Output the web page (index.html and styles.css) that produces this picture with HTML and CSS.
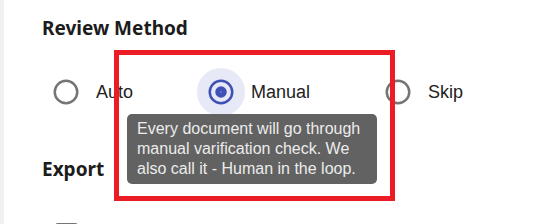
FILE: index.html
```html
<!DOCTYPE html>
<html lang="en">
<head>
<meta charset="utf-8">
<title>Review Method</title>
<link rel="stylesheet" href="styles.css">
</head>
<body>
<div class="page">
  <div class="rail"></div>
  <main class="content">
    <h2 class="section-title">Review Method</h2>
    <div class="radio-group" role="radiogroup">
      <label class="option">
        <span class="radio">
          <svg class="radio-icon" viewBox="0 0 24 24" width="30" height="30"><circle cx="12" cy="12" r="9" fill="none" stroke="#757575" stroke-width="2"/></svg>
        </span>
        <span class="option-label">Auto</span>
      </label>
      <label class="option option-tip">
        <span class="radio radio-checked">
          <svg class="radio-icon" viewBox="0 0 24 24" width="30" height="30"><circle cx="12" cy="12" r="9" fill="none" stroke="#3f51b5" stroke-width="2"/><circle cx="12" cy="12" r="4.6" fill="#3f51b5"/><circle cx="12" cy="12" r="0.5" fill="#c5cae9"/></svg>
        </span>
        <span class="option-label">Manual</span>
        <span class="tooltip" role="tooltip">Every document will go through manual varification check. We also call it - Human in the loop.</span>
      </label>
      <label class="option">
        <span class="radio">
          <svg class="radio-icon" viewBox="0 0 24 24" width="30" height="30"><circle cx="12" cy="12" r="9" fill="none" stroke="#757575" stroke-width="2"/></svg>
        </span>
        <span class="option-label">Skip</span>
      </label>
    </div>
    <h2 class="section-title section-export">Export</h2>
    <div class="check-group">
      <label class="option">
        <span class="radio">
          <span class="checkbox-box"></span>
        </span>
      </label>
    </div>
  </main>
  <div class="highlight"></div>
</div>
</body>
</html>
```
FILE: styles.css
```css
html, body {
  margin: 0;
  padding: 0;
  background: #ffffff;
}
body {
  font-family: "Liberation Sans", Arial, sans-serif;
  color: #212121;
  overflow: hidden;
}
.page {
  position: relative;
  display: flex;
  width: 559px;
  height: 224px;
  overflow: hidden;
}
.rail {
  width: 4px;
  flex: none;
  background: #f0f0f0;
}
.content {
  flex: 1;
  padding: 16px 0 0 38px;
}
.section-title {
  margin: 0;
  font-family: "Noto Sans", "Open Sans", sans-serif;
  font-weight: 700;
  font-size: 19px;
  line-height: 24px;
  color: #1c1c1c;
}
.radio-group {
  display: flex;
  align-items: center;
  gap: 64px;
  margin-top: 28px;
  height: 48px;
}
.section-export {
  margin-top: 41px;
}
.check-group {
  display: flex;
  margin-top: 29px;
  height: 48px;
}
.option {
  position: relative;
  display: flex;
  align-items: center;
  gap: 6px;
}
.radio {
  width: 48px;
  height: 48px;
  border-radius: 50%;
  display: flex;
  align-items: center;
  justify-content: center;
  flex: none;
}
.radio-checked {
  background: #e8e9f6;
}
.radio-icon {
  display: block;
}
.option-label {
  font-size: 18px;
  line-height: 24px;
  color: #222222;
}
.checkbox-box {
  width: 19px;
  height: 19px;
  border: 2.5px solid #757575;
  border-radius: 3px;
}
.tooltip {
  position: absolute;
  left: -70px;
  top: 46px;
  width: 250px;
  box-sizing: border-box;
  padding: 5px 10px;
  background: #626262;
  color: #ececec;
  border-radius: 5px;
  font-size: 16px;
  line-height: 20px;
  z-index: 2;
}
.highlight {
  position: absolute;
  left: 114px;
  top: 50px;
  width: 281px;
  height: 151px;
  box-sizing: border-box;
  border: 5px solid #ec1c24;
  z-index: 3;
  pointer-events: none;
}
```
